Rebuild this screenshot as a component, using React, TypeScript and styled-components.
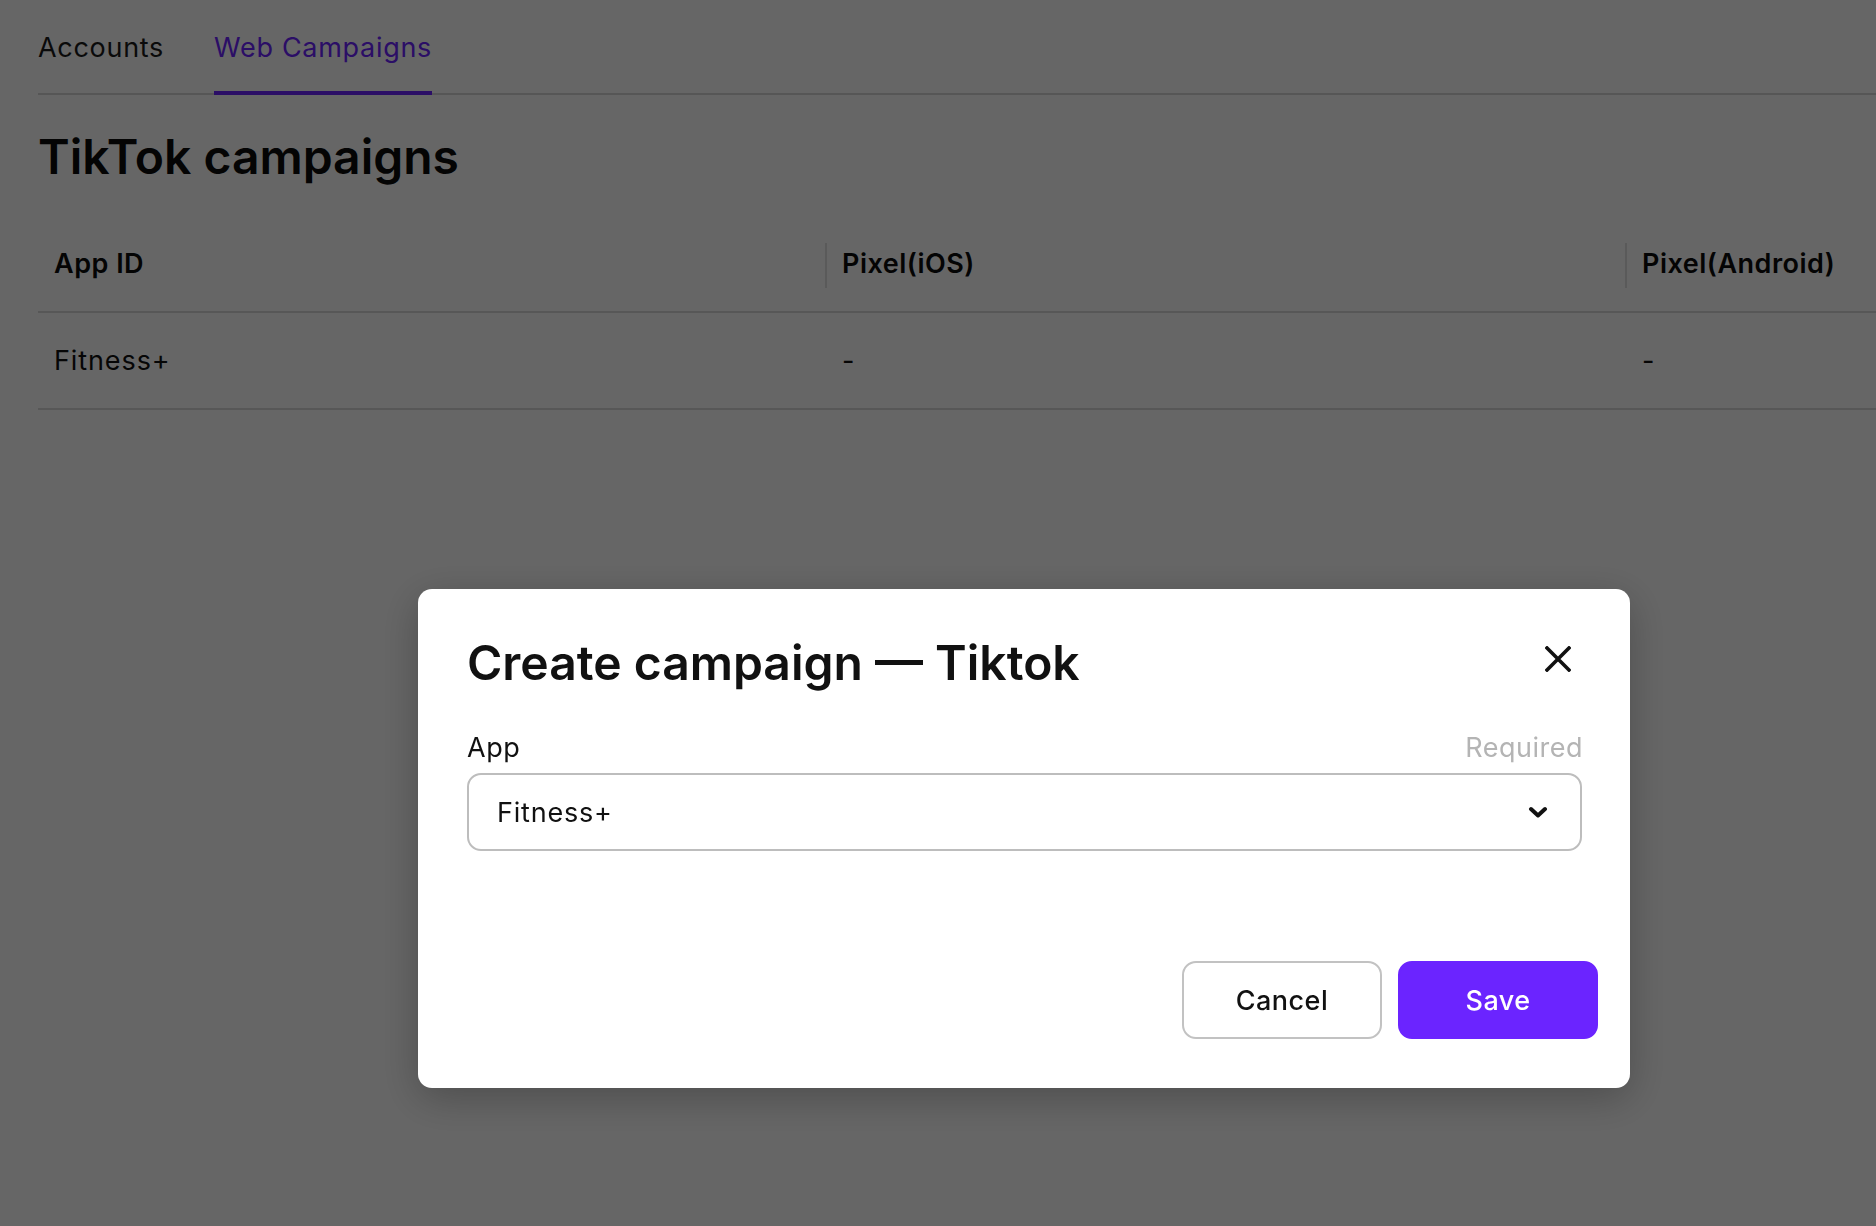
import React from "react";
import styled, { createGlobalStyle } from "styled-components";

const GlobalStyle = createGlobalStyle`
  html, body {
    margin: 0;
    padding: 0;
    background: #ffffff;
    font-family: Inter, "Noto Sans", "Liberation Sans", sans-serif;
    color: #111111;
    overflow: hidden;
  }
  * { box-sizing: border-box; }
`;

const Page = styled.div`
  padding: 0 0 0 38px;
  width: 1876px;
  height: 1226px;
`;

const TabBar = styled.div`
  display: flex;
  gap: 50px;
  border-bottom: 2px solid #d6d6d6;
`;

const Tab = styled.div<{ $active?: boolean }>`
  font-size: 27px;
  line-height: 32px;
  letter-spacing: 0.7px;
  padding: 32px 0 27px;
  color: ${(p) => (p.$active ? "#6b24ff" : "#1a1a1a")};
  border-bottom: 4px solid ${(p) => (p.$active ? "#6b24ff" : "transparent")};
  margin-bottom: -2px;
`;

const Title = styled.h1`
  margin: 33px 0 30px;
  font-size: 48px;
  line-height: 58px;
  font-weight: 600;
  color: #0a0a0a;
`;

const Table = styled.div`
  display: grid;
  grid-template-columns: 787px 800px 1fr;
`;

const HeadCell = styled.div<{ $sep?: boolean }>`
  position: relative;
  height: 97px;
  display: flex;
  align-items: center;
  padding-left: ${(p) => (p.$sep ? "17px" : "16px")};
  font-size: 27px;
  line-height: 32px;
  letter-spacing: 0.5px;
  font-weight: 600;
  color: #0a0a0a;
  border-bottom: 2px solid #dadada;
  white-space: nowrap;
  ${(p) =>
    p.$sep
      ? `&::before {
    content: "";
    position: absolute;
    left: 0;
    top: 27px;
    height: 45px;
    width: 2px;
    background: #e2e2e2;
  }`
      : ""}
`;

const Cell = styled.div<{ $sep?: boolean }>`
  height: 97px;
  display: flex;
  align-items: center;
  padding-left: ${(p) => (p.$sep ? "17px" : "16px")};
  font-size: 27px;
  line-height: 32px;
  letter-spacing: 0.9px;
  color: #111111;
  border-bottom: 2px solid #dadada;
`;

const Overlay = styled.div`
  position: fixed;
  inset: 0;
  background: rgba(0, 0, 0, 0.6);
  padding: 589px 0 0 418px;
`;

const Modal = styled.div`
  width: 1212px;
  background: #ffffff;
  border-radius: 14px;
  box-shadow: 0 10px 40px rgba(0, 0, 0, 0.25);
  display: flex;
  flex-direction: column;
`;

const ModalBody = styled.div`
  padding: 46px 48px 0 49px;
  display: flex;
  flex-direction: column;
`;

const ModalHeader = styled.div`
  display: flex;
  align-items: center;
  justify-content: space-between;
  height: 56px;
`;

const ModalTitle = styled.h2`
  margin: 0;
  font-size: 48px;
  line-height: 56px;
  font-weight: 600;
  color: #111111;
`;

const CloseButton = styled.button`
  border: 0;
  background: none;
  padding: 0;
  width: 26px;
  height: 26px;
  margin-right: 11px;
  margin-top: -8px;
  display: flex;
  cursor: pointer;
`;

const FieldHead = styled.div`
  display: flex;
  justify-content: space-between;
  margin-top: 41px;
  font-size: 27px;
  line-height: 32px;
  letter-spacing: 0.5px;
`;

const Label = styled.span`
  color: #111111;
`;

const Hint = styled.span`
  color: #b4b4b4;
  margin-right: -1px;
`;

const Select = styled.div`
  margin-top: 9px;
  height: 78px;
  border: 2px solid #bdbdbd;
  border-radius: 14px;
  display: flex;
  align-items: center;
  justify-content: space-between;
  padding: 0 32px 0 28px;
  font-size: 27px;
  letter-spacing: 0.8px;
  color: #111111;
`;

const Footer = styled.div`
  display: flex;
  justify-content: flex-end;
  gap: 16px;
  padding: 110px 32px 49px 0;
`;

const Button = styled.button<{ $primary?: boolean }>`
  width: 200px;
  height: 78px;
  border-radius: 14px;
  font-family: Inter, "Noto Sans", "Liberation Sans", sans-serif;
  font-size: 27px;
  font-weight: 500;
  letter-spacing: 0.45px;
  cursor: pointer;
  background: ${(p) => (p.$primary ? "#6b24ff" : "#ffffff")};
  color: ${(p) => (p.$primary ? "#ffffff" : "#111111")};
  border: 2px solid ${(p) => (p.$primary ? "#6b24ff" : "#c2c2c2")};
`;

export default function App() {
  return (
    <>
      <GlobalStyle />
      <Page>
        <TabBar>
          <Tab>Accounts</Tab>
          <Tab $active>Web Campaigns</Tab>
        </TabBar>
        <Title>TikTok campaigns</Title>
        <Table>
          <HeadCell>App ID</HeadCell>
          <HeadCell $sep>Pixel(iOS)</HeadCell>
          <HeadCell $sep>Pixel(Android)</HeadCell>
          <Cell>Fitness+</Cell>
          <Cell $sep>-</Cell>
          <Cell $sep>-</Cell>
        </Table>
      </Page>
      <Overlay>
        <Modal>
          <ModalBody>
            <ModalHeader>
              <ModalTitle>Create campaign — Tiktok</ModalTitle>
              <CloseButton aria-label="Close">
                <svg width="26" height="26" viewBox="0 0 26 26">
                  <path d="M2 2 L24 24 M24 2 L2 24" stroke="#111" strokeWidth="3.6" strokeLinecap="square" fill="none" />
                </svg>
              </CloseButton>
            </ModalHeader>
            <FieldHead>
              <Label>App</Label>
              <Hint>Required</Hint>
            </FieldHead>
            <Select>
              <span>Fitness+</span>
              <svg width="20" height="12" viewBox="0 0 20 12">
                <path d="M3 3 L10 9.5 L17 3" stroke="#111" strokeWidth="4" strokeLinecap="round" strokeLinejoin="round" fill="none" />
              </svg>
            </Select>
          </ModalBody>
          <Footer>
            <Button>Cancel</Button>
            <Button $primary>Save</Button>
          </Footer>
        </Modal>
      </Overlay>
    </>
  );
}
